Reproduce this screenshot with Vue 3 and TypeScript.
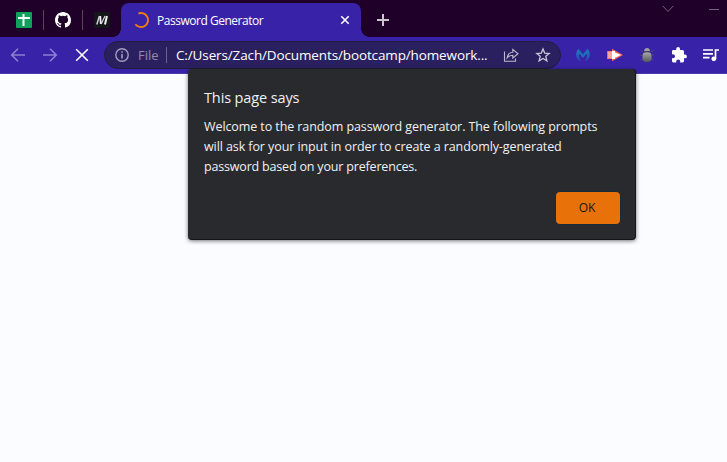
<script setup lang="ts">
import { ref } from 'vue'

const open = ref(true)
const tabTitle = 'Password Generator'
const address = 'C:/Users/Zach/Documents/bootcamp/homework...'
const message: string[] = [
  'Welcome to the random password generator. The following prompts',
  'will ask for your input in order to create a randomly-generated',
  'password based on your preferences.',
]
</script>

<template>
  <div class="browser">
    <header class="tabs">
      <div class="pinned">
        <svg width="16" height="16" viewBox="0 0 16 16"><rect width="16" height="16" rx="1" fill="#10a05b" /><path d="M2 6H14M7.5 2V14" stroke="#fff" stroke-width="2" /></svg>
      </div>
      <div class="pinned ruled">
        <svg width="16" height="16" viewBox="0 0 16 16"><path fill="#fff" d="M8 0C3.58 0 0 3.58 0 8c0 3.54 2.29 6.53 5.47 7.59.4.07.55-.17.55-.38 0-.19-.01-.82-.01-1.49-2.01.37-2.53-.49-2.69-.94-.09-.23-.48-.94-.82-1.13-.28-.15-.68-.52-.01-.53.63-.01 1.08.58 1.23.82.72 1.21 1.87.87 2.33.66.07-.52.28-.87.51-1.07-1.78-.2-3.64-.89-3.64-3.95 0-.87.31-1.59.82-2.15-.08-.2-.36-1.02.08-2.12 0 0 .67-.21 2.2.82a7.4 7.4 0 0 1 4 0c1.53-1.04 2.2-.82 2.2-.82.44 1.1.16 1.92.08 2.12.51.56.82 1.27.82 2.15 0 3.07-1.87 3.75-3.65 3.95.29.25.54.73.54 1.48 0 1.07-.01 1.93-.01 2.2 0 .21.15.46.55.38A8.01 8.01 0 0 0 16 8c0-4.42-3.58-8-8-8z" /></svg>
      </div>
      <div class="pinned ruled">
        <svg width="16" height="16" viewBox="0 0 16 16"><rect width="16" height="16" fill="#14161a" /><path d="M2.8 12.5L5.4 4" stroke="#d9d6da" stroke-width="1.4" /><path d="M6.2 4L6.8 12" stroke="#f2f0f2" stroke-width="1.8" /><path d="M7.2 12L11 4" stroke="#d9d6da" stroke-width="1.2" /><path d="M12.9 4L11 12.5" stroke="#f2f0f2" stroke-width="2" /></svg>
      </div>
      <div class="tab">
        <svg width="16" height="16" viewBox="0 0 16 16"><path d="M5.4 1.5A7 7 0 1 1 2.4 12.2" fill="none" stroke="#ee7d12" stroke-width="1.9" /></svg>
        <span class="title">{{ tabTitle }}</span>
        <svg class="close" width="16" height="16" viewBox="0 0 16 16"><path d="M4.3 4.3L11.7 11.7M11.7 4.3L4.3 11.7" stroke="#fff" stroke-width="1.6" /></svg>
      </div>
      <svg class="plus" width="14" height="14" viewBox="0 0 14 14"><path d="M7 1V13M1 7H13" stroke="#cdc6d1" stroke-width="2" /></svg>
      <div class="window">
        <svg width="12" height="8" viewBox="0 0 12 8"><path d="M.8 1L6 6.5L11.2 1" fill="none" stroke="#77627d" stroke-width="1" /></svg>
        <svg width="10" height="8" viewBox="0 0 10 8"><path d="M0 4.5H10" stroke="#77627d" /></svg>
      </div>
    </header>

    <nav class="toolbar">
      <div class="cell"><svg width="16" height="16" viewBox="0 0 16 16"><path d="M15 8H2M8 1.7L1.7 8L8 14.3" fill="none" stroke="#8d80d0" stroke-width="1.6" /></svg></div>
      <div class="cell"><svg width="16" height="16" viewBox="0 0 16 16"><path d="M1 8H14M8 1.7L14.3 8L8 14.3" fill="none" stroke="#8d80d0" stroke-width="1.6" /></svg></div>
      <div class="cell"><svg width="16" height="16" viewBox="0 0 16 16"><path d="M2.2 2.2L13.8 13.8M13.8 2.2L2.2 13.8" stroke="#fff" stroke-width="1.6" /></svg></div>
      <div class="omnibox">
        <svg width="16" height="16" viewBox="0 0 16 16"><circle cx="8" cy="8" r="6.2" fill="none" stroke="#a39fbc" stroke-width="1.4" /><path d="M8 7V11.5M8 4.3V5.8" stroke="#a39fbc" stroke-width="1.6" /></svg>
        <span class="scheme">File</span>
        <i class="bar"></i>
        <span class="url">{{ address }}</span>
        <svg class="share" width="16" height="16" viewBox="0 0 16 16"><path d="M1.5 4.5V14.3H12.5V11.5M4.2 10.8C4.6 7.3 6.6 5.5 9.8 5.3V2.4L15 6.8L9.8 11V8.2C7.3 8.2 5.7 8.8 4.2 10.8Z" fill="none" stroke="#bcb8d0" stroke-width="1.1" /></svg>
        <svg width="16" height="16" viewBox="0 0 16 16"><path d="M8 2L9.7 6.1L14.2 6.5L10.8 9.3L11.9 13.8L8 11.4L4.1 13.8L5.2 9.3L1.8 6.5L6.3 6.1Z" fill="none" stroke="#c8c5d8" stroke-width="1.3" /></svg>
      </div>
      <div class="extensions">
        <div class="cell"><svg width="16" height="16" viewBox="0 0 16 16"><path fill="#1f70b9" d="M3.6 1.8L8 7.5L12.4 1.8C14 3.2 14.8 5.2 14.8 8C14.8 10.5 13.2 13 10 14.2C11.8 12 12.3 9.2 11.6 6.5L8 11L4.4 6.5C3.7 9.2 4.2 12 6 14.2C2.8 13 1.2 10.5 1.2 8C1.2 5.2 2 3.2 3.6 1.8Z" /><path d="M2.9 7.5C2.8 10 3.3 11.5 4.2 12.7M13.1 7.5C13.2 10 12.7 11.5 11.8 12.7" fill="none" stroke="#3823a8" stroke-width=".6" /></svg></div>
        <div class="cell"><svg width="16" height="16" viewBox="0 0 16 16"><path d="M0 4H5V1.8L16 8L5 14.2V12H0Z" fill="#f4685e" /><path d="M1 4.7H5V11.3H1Z" fill="#ffa399" /><path d="M5 4H8V5.5L14 8L8 10.8V12H5Z" fill="#fff" /></svg></div>
        <div class="cell"><svg width="16" height="16" viewBox="0 0 16 16"><defs><linearGradient id="shell" x2="0" y2="1"><stop stop-color="#aaa" /><stop offset="1" stop-color="#55585b" /></linearGradient></defs><path d="M4 5L1.5 3.5M3 8H1M4 11L2 13.5M12 5L14.5 3.5M13 8H15M12 11L14 13.5" stroke="#574871" stroke-width="1" /><rect x="3.5" y="5" width="9" height="10" rx="4" fill="url(#shell)" /><path d="M5 4.2Q5.5 1 8 1T11 4.2Z" fill="#a0a1a4" /><path d="M4.5 4.8H11.5" stroke="#424149" /></svg></div>
        <div class="cell"><svg width="16" height="16" viewBox="0 0 16 16"><path fill="#fff" d="M14 7.5h-1V4.5A1.5 1.5 0 0 0 11.5 3H9V2a1.9 1.9 0 0 0-3.8 0v1H2.5A1.4 1.4 0 0 0 1 4.4v2.8h1a2 2 0 0 1 0 4H1v2.9A1.4 1.4 0 0 0 2.4 15.5h2.8v-1a2 2 0 0 1 4 0v1h2.4A1.4 1.4 0 0 0 13 14.1v-2.8h1a1.9 1.9 0 0 0 0-3.8z" /></svg></div>
        <div class="cell"><svg width="16" height="16" viewBox="0 0 16 16"><path d="M0 3H10M0 6.8H10M0 10.6H6.5M12.5 12V3H16" fill="none" stroke="#fff" stroke-width="1.7" /><circle cx="10.8" cy="11.8" r="2.4" fill="#fff" /></svg></div>
      </div>
    </nav>

    <main class="page"></main>

    <section v-if="open" class="dialog" role="alertdialog">
      <h1>This page says</h1>
      <p><span v-for="(line, i) in message" :key="i" :class="'line line-' + i">{{ line }}</span></p>
      <button type="button" @click="open = false">OK</button>
    </section>
  </div>
</template>

<style>
body { overflow: hidden; }
</style>

<style scoped>
.browser {
  position: relative;
  display: flex;
  flex-direction: column;
  height: 462px;
  overflow: hidden;
  background: #fbfcff;
  font-family: "Open Sans", "Noto Sans", sans-serif;
}
svg { display: block; flex: none; }
.tabs {
  display: flex;
  height: 37px;
  padding-left: 5px;
  box-sizing: border-box;
  background: #1f0029;
}
.pinned {
  display: flex;
  align-items: center;
  justify-content: center;
  width: 39px;
  padding-top: 3px;
  height: 34px;
  background: linear-gradient(#59435f, #59435f) 0 10px / 0 20px no-repeat;
}
.pinned:first-child { width: 38px; }
.pinned.ruled { background-size: 1px 20px; }
.tab {
  position: relative;
  display: flex;
  align-items: center;
  width: 240px;
  height: 34px;
  margin-top: 3px;
  padding: 0 8px 0 12px;
  box-sizing: border-box;
  border-radius: 8px 8px 0 0;
  background: #3823a8;
}
.tab::before,
.tab::after {
  content: "";
  position: absolute;
  bottom: 0;
  width: 8px;
  height: 8px;
}
.tab::before { left: -8px; background: radial-gradient(circle at 0 0, transparent 7.5px, #3823a8 8px); }
.tab::after { right: -8px; background: radial-gradient(circle at 100% 0, transparent 7.5px, #3823a8 8px); }
.title { margin-left: 8px; color: #fff; font-size: 12px; letter-spacing: -0.48px; white-space: nowrap; }
.close { margin-left: auto; }
.plus { margin: 13px 0 0 15px; }
.window { display: flex; gap: 35px; margin: 5px 8px 0 auto; }
.toolbar {
  display: flex;
  align-items: center;
  height: 37px;
  padding-left: 2px;
  box-sizing: border-box;
  background: #3823a8;
  border-bottom: 1px solid #4b3aad;
}
.cell { display: flex; align-items: center; justify-content: center; width: 32px; height: 36px; flex: none; }
.omnibox {
  display: flex;
  align-items: center;
  width: 457px;
  height: 28px;
  margin-left: 6px;
  padding: 0 9px;
  box-sizing: border-box;
  border: 1px solid #211d3c;
  border-radius: 14px;
  background: #2b205f;
  font-size: 13px;
  white-space: nowrap;
}
.scheme { width: 28px; margin-left: 8px; color: #918bac; }
.bar { width: 1px; height: 16px; background: #6c638f; }
.url { width: 319px; margin-left: 9px; color: #fff; font-size: 13.5px; letter-spacing: -0.13px; }
.share { margin: 0 16px 0 auto; }
.extensions { display: flex; margin-left: 6px; }
.page { flex: 1; background: #fbfcff; }
.dialog {
  position: absolute;
  left: 188px;
  top: 69px;
  display: flex;
  flex-direction: column;
  width: 448px;
  height: 171px;
  padding: 17px 16px 15px;
  box-sizing: border-box;
  border: 1px solid #15161a;
  border-width: 0 1px 1px 0;
  border-radius: 4px;
  background: #292a2d;
  box-shadow: 0 1px 4px rgba(0, 0, 0, 0.55);
  color: #f0f1f3;
}
h1 { margin: 0; font-size: 14.5px; line-height: 24px; font-weight: 400; letter-spacing: -0.12px; }
p { margin: 7px 0 0; font-size: 12.5px; line-height: 20px; }
.line { display: block; white-space: nowrap; letter-spacing: -0.09px; }
.line-2 { letter-spacing: -0.18px; }
button {
  align-self: flex-end;
  flex: none;
  width: 64px;
  height: 32px;
  margin: 15px -1px 0 0;
  padding: 0 2px 2px 0;
  border: 0;
  border-radius: 4px;
  background: #e8710a;
  box-shadow: 0 0 0 1px #182c38;
  color: #17181b;
  font: 500 12px "Open Sans", sans-serif;
}
</style>
